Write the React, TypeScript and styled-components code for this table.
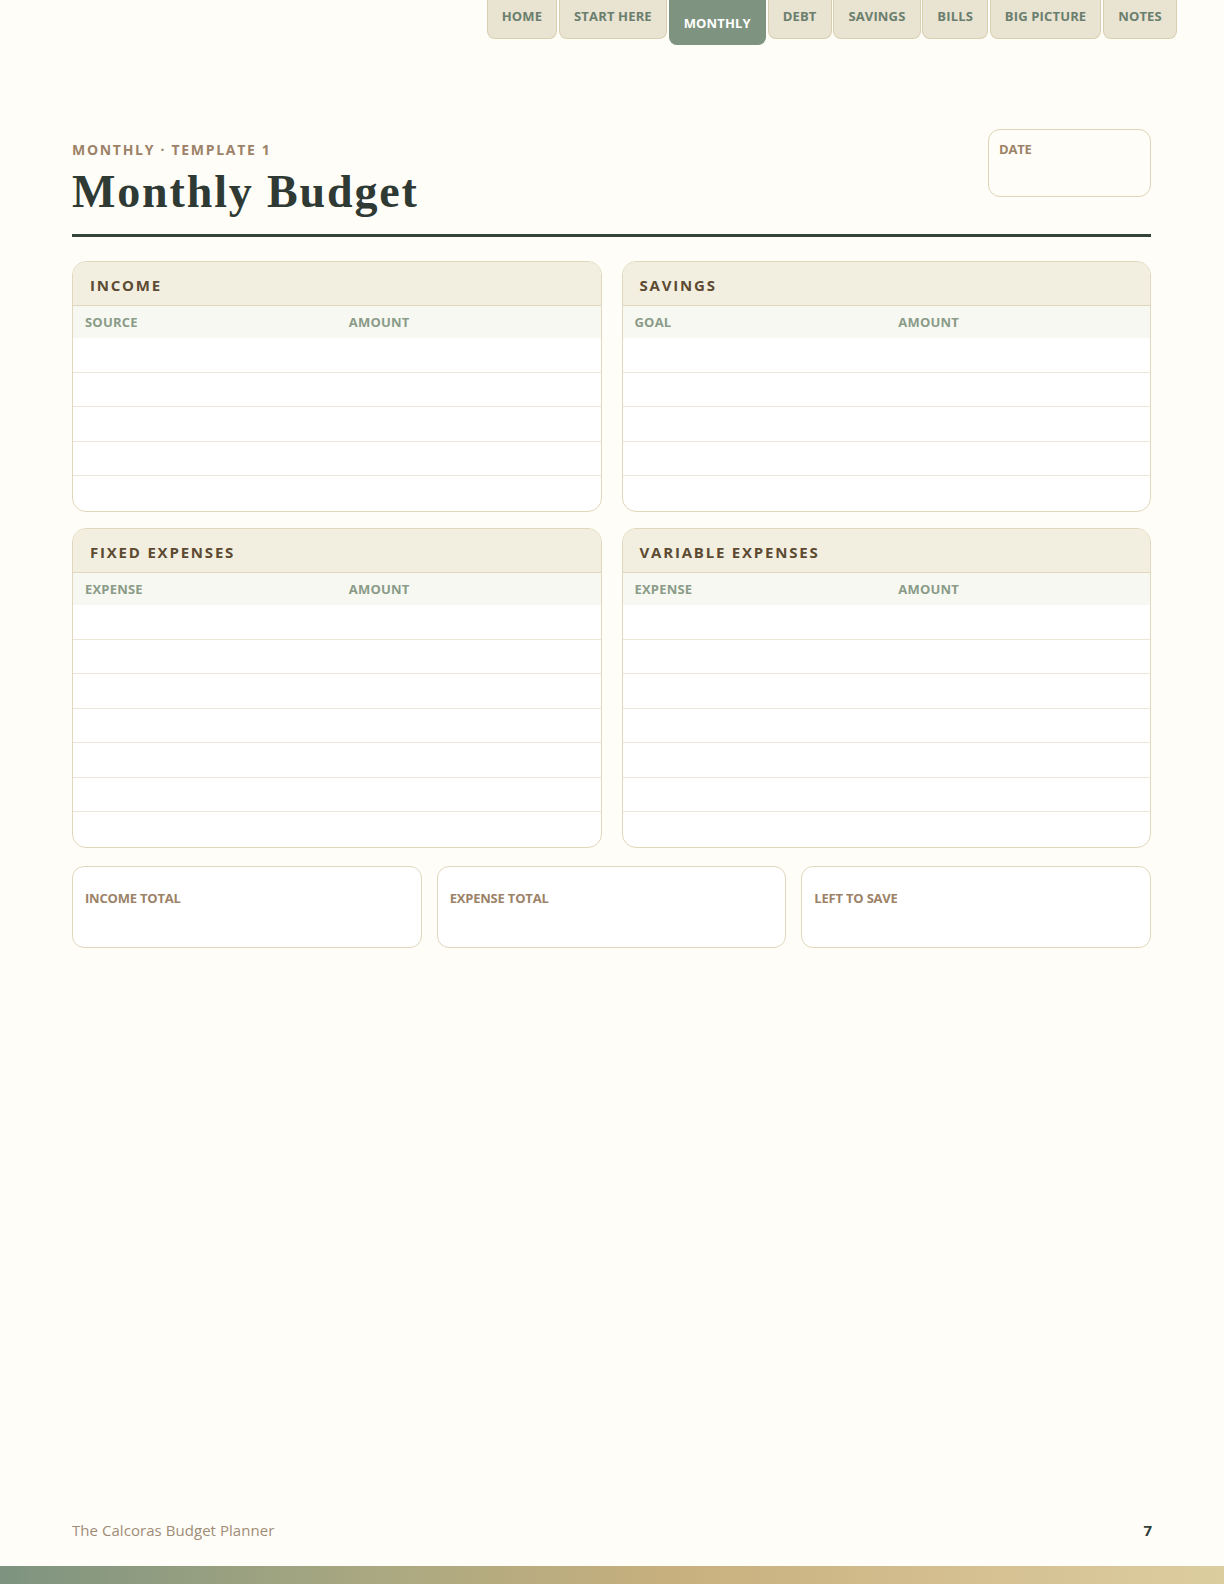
import React from "react";
import styled, { createGlobalStyle } from "styled-components";

const GlobalStyle = createGlobalStyle`
  * { box-sizing: border-box; }
  html, body { margin: 0; padding: 0; background: #fffdf7; }
  body { font-family: "Open Sans", "Noto Sans", sans-serif; }
`;

const Page = styled.div`
  min-height: 1584px;
  display: flex;
  flex-direction: column;
  background: #fffdf7;
`;

const TabBar = styled.nav`
  display: flex;
  justify-content: flex-end;
  align-items: flex-start;
  gap: 1.5px;
  padding-right: 47px;
  height: 45px;
`;

const Tab = styled.div<{ $active?: boolean }>`
  height: ${(p) => (p.$active ? "45px" : "38.5px")};
  padding: ${(p) => (p.$active ? "14px 14.2px 0" : "7px 14.2px 0")};
  background: ${(p) => (p.$active ? "#7e9480" : "#e9e3d1")};
  border: 1.5px solid ${(p) => (p.$active ? "#7e9480" : "#d8ceb0")};
  border-top: none;
  border-radius: 0 0 8px 8px;
  color: ${(p) => (p.$active ? "#ffffff" : "#6a7e6e")};
  font-size: 13px;
  font-weight: 700;
  letter-spacing: 0.15px;
  line-height: 18px;
  white-space: nowrap;
`;

const Content = styled.main`
  padding: 0 73px 0 72px;
  flex: 1;
  display: flex;
  flex-direction: column;
`;

const Header = styled.header`
  margin-top: 84px;
  display: flex;
  justify-content: space-between;
  align-items: flex-start;
  padding-bottom: 17px;
  border-bottom: 3px solid #34443a;
`;

const TitleBlock = styled.div`
  padding-top: 12px;
  display: flex;
  flex-direction: column;
`;

const Eyebrow = styled.div`
  font-size: 14px;
  font-weight: 700;
  letter-spacing: 1.7px;
  line-height: 17px;
  color: #9c8268;
`;

const Title = styled.h1`
  margin: 9px 0 0;
  font-family: "Liberation Serif", "DejaVu Serif", serif;
  font-weight: 700;
  font-size: 46px;
  line-height: 50px;
  color: #2e3a33;
  letter-spacing: 1.85px;
`;

const DateBox = styled.div`
  width: 163px;
  height: 68px;
  border: 1.5px solid #ded4b8;
  border-radius: 12px;
  padding: 10px 10px;
`;

const SmallLabel = styled.div`
  font-size: 13px;
  font-weight: 700;
  line-height: 18px;
  color: #9c8268;
  letter-spacing: -0.2px;
`;

const Grid = styled.section`
  margin-top: 24px;
  display: grid;
  grid-template-columns: 1fr 1fr;
  column-gap: 20px;
  row-gap: 16.5px;
`;

const Card = styled.div`
  border: 1.5px solid #e0d7bc;
  border-radius: 14px;
  overflow: hidden;
  background: #ffffff;
`;

const CardHeader = styled.div`
  height: 44px;
  background: #f3efe0;
  border-bottom: 1.5px solid #e0d7bc;
  display: flex;
  align-items: center;
  padding: 3px 17px 0;
  font-size: 15px;
  font-weight: 700;
  letter-spacing: 1.8px;
  color: #5c4a32;
`;

const ColHeader = styled.div`
  height: 32px;
  background: #f7f8f2;
  display: grid;
  grid-template-columns: 1fr 1fr;
  align-items: center;
`;

const ColLabel = styled.div`
  padding: 0 12px;
  font-size: 13px;
  font-weight: 700;
  letter-spacing: 0.2px;
  color: #8a9b88;
`;

const Row = styled.div`
  height: 34.5px;
  border-bottom: 1px solid #ebe6d6;
  &:last-child { border-bottom: none; }
`;

const Totals = styled.section`
  margin-top: 18.5px;
  display: grid;
  grid-template-columns: repeat(3, 1fr);
  gap: 15px;
`;

const TotalBox = styled.div`
  height: 82px;
  border: 1.5px solid #e0d7bc;
  border-radius: 12px;
  background: #ffffff;
  padding: 22px 12px 0;
`;

const Footer = styled.footer`
  margin-top: auto;
  padding: 0 72px 0 72px;
  height: 47px;
  display: flex;
  justify-content: space-between;
  align-items: flex-start;
`;

const FooterText = styled.span`
  font-size: 15px;
  color: #9e8c78;
  line-height: 22px;
  letter-spacing: 0.05px;
`;

const PageNum = styled.span`
  font-size: 15px;
  font-weight: 700;
  color: #2f3f35;
  line-height: 22px;
`;

const GradientBar = styled.div`
  height: 18px;
  background: linear-gradient(90deg, #7e9480 0%, #a9a881 30%, #c8b07e 55%, #d3bd8e 75%, #dccd9f 100%);
`;

type Section = { title: string; cols: [string, string]; rows: number };

const sections: Section[] = [
  { title: "INCOME", cols: ["SOURCE", "AMOUNT"], rows: 5 },
  { title: "SAVINGS", cols: ["GOAL", "AMOUNT"], rows: 5 },
  { title: "FIXED EXPENSES", cols: ["EXPENSE", "AMOUNT"], rows: 7 },
  { title: "VARIABLE EXPENSES", cols: ["EXPENSE", "AMOUNT"], rows: 7 },
];

const tabs = ["HOME", "START HERE", "MONTHLY", "DEBT", "SAVINGS", "BILLS", "BIG PICTURE", "NOTES"];

export default function App() {
  return (
    <>
      <GlobalStyle />
      <Page>
        <TabBar>
          {tabs.map((t) => (
            <Tab key={t} $active={t === "MONTHLY"}>
              {t}
            </Tab>
          ))}
        </TabBar>
        <Content>
          <Header>
            <TitleBlock>
              <Eyebrow>MONTHLY · TEMPLATE 1</Eyebrow>
              <Title>Monthly Budget</Title>
            </TitleBlock>
            <DateBox>
              <SmallLabel>DATE</SmallLabel>
            </DateBox>
          </Header>
          <Grid>
            {sections.map((s) => (
              <Card key={s.title}>
                <CardHeader>{s.title}</CardHeader>
                <ColHeader>
                  <ColLabel>{s.cols[0]}</ColLabel>
                  <ColLabel>{s.cols[1]}</ColLabel>
                </ColHeader>
                {Array.from({ length: s.rows }).map((_, i) => (
                  <Row key={i} />
                ))}
              </Card>
            ))}
          </Grid>
          <Totals>
            <TotalBox>
              <SmallLabel>INCOME TOTAL</SmallLabel>
            </TotalBox>
            <TotalBox>
              <SmallLabel>EXPENSE TOTAL</SmallLabel>
            </TotalBox>
            <TotalBox>
              <SmallLabel>LEFT TO SAVE</SmallLabel>
            </TotalBox>
          </Totals>
        </Content>
        <Footer>
          <FooterText>The Calcoras Budget Planner</FooterText>
          <PageNum>7</PageNum>
        </Footer>
        <GradientBar />
      </Page>
    </>
  );
}
